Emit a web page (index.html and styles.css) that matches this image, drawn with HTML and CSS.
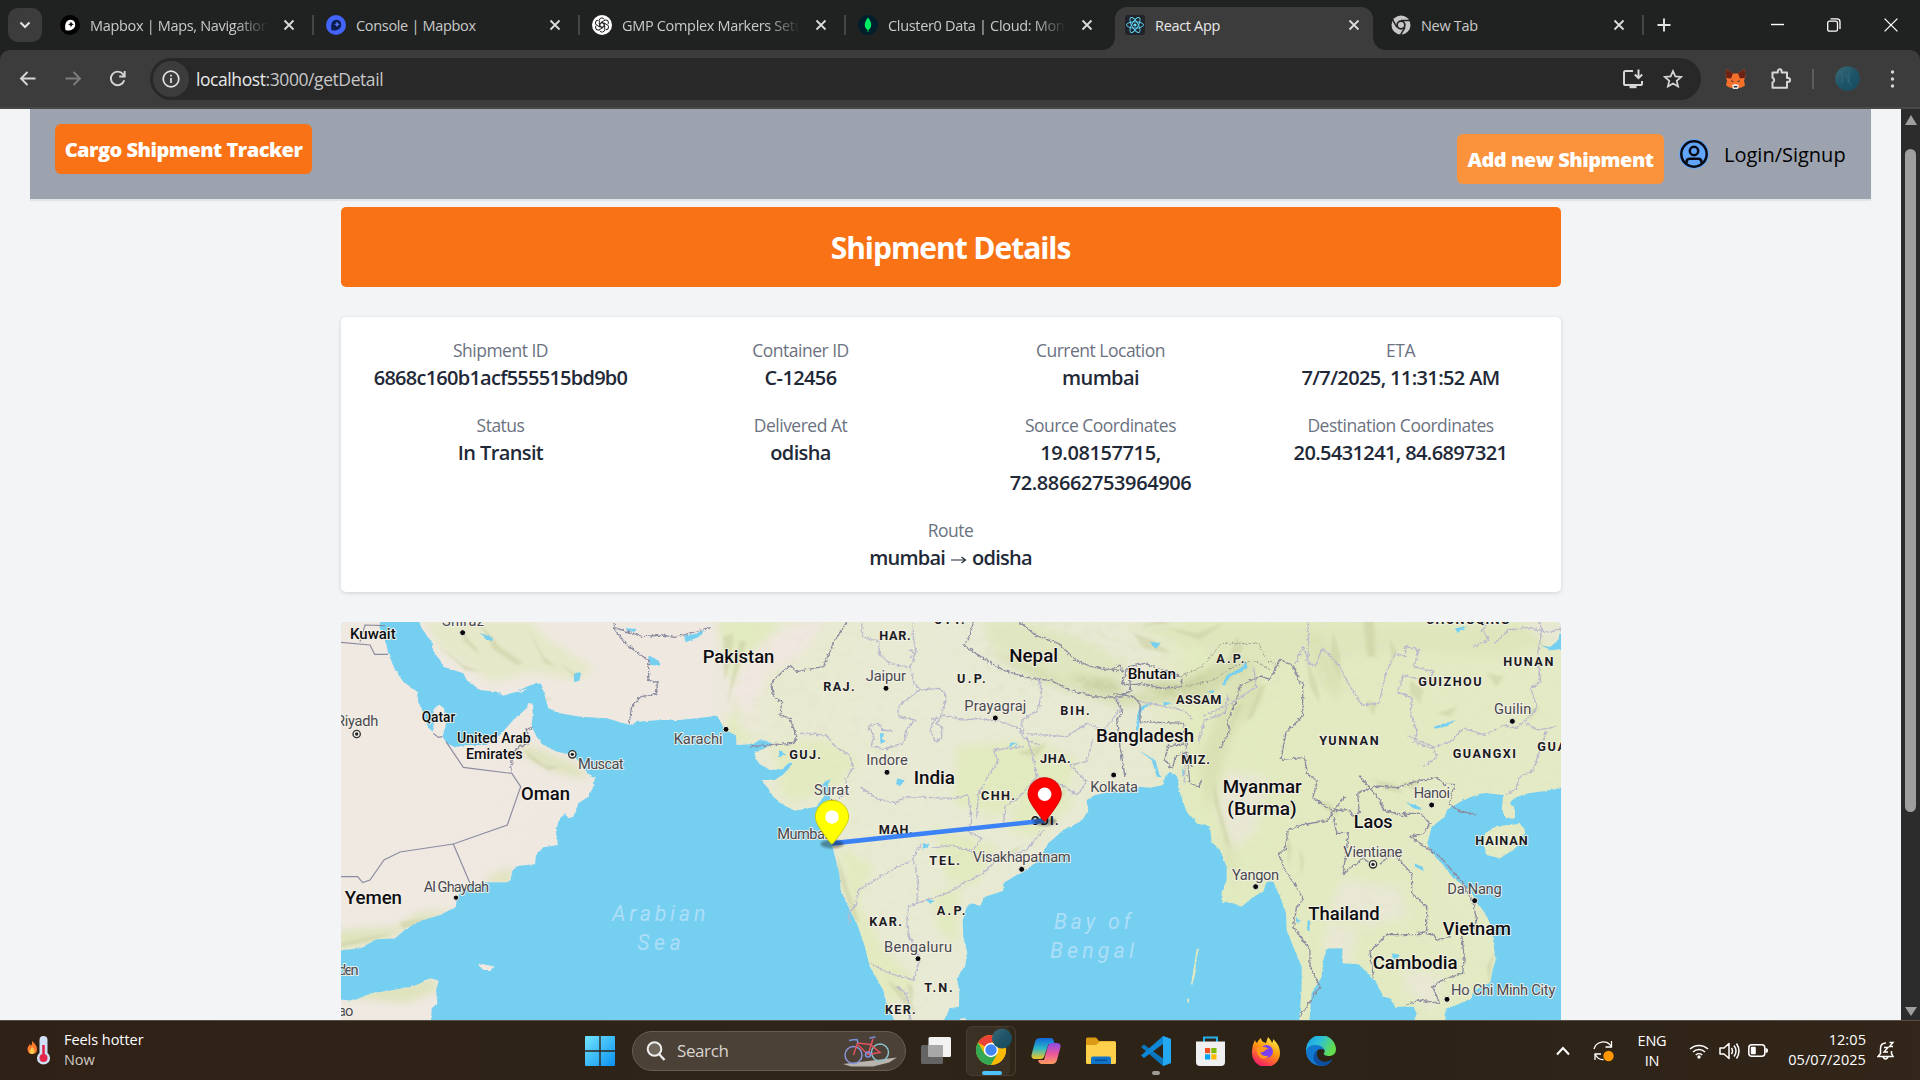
FILE: index.html
```html
<!DOCTYPE html>
<html lang="en">
<head>
<meta charset="utf-8">
<title>React App</title>
<link rel="stylesheet" href="styles.css">
</head>
<body>
<svg class="defs" width="0" height="0" aria-hidden="true">
  <symbol id="x" viewBox="0 0 12 12"><path d="M1.5 1.5l9 9M10.500 1.500l-9 9" fill="none" stroke="currentColor" stroke-width="1.8"/></symbol>
  <symbol id="chromeg" viewBox="0 0 20 20"><circle cx="10" cy="10" r="9.500" fill="#c7c7c7"/><circle cx="10" cy="10" r="4.700" fill="#202221"/><circle cx="10" cy="10" r="3" fill="#c7c7c7"/><path d="M10 5.400h9M6 12.300L1.500 4.600M14 12.300l-4.500 7.700" stroke="#202221" stroke-width="1.500"/></symbol>
</svg>

<header class="tabstrip">
  <div class="tabsearch"><svg width="12" height="8" viewBox="0 0 12 8"><path d="M1.500 1.500L6 6l4.500-4.500" fill="none" stroke="#e3e3e3" stroke-width="2"/></svg></div>
  <div class="tabs">
    <div class="tab">
      <svg class="fav" viewBox="0 0 20 20"><circle cx="10" cy="10" r="10" fill="#000"/><path d="M5.500 15.300c-1-6 .4-10.500 5.300-10.500a4.900 4.900 0 0 1 4.400 4.900c0 4.600-4.600 6.200-9.700 5.600z" fill="#fff"/><path d="M11 6.400l.9 2 2 .9-2 .9-.9 2-.9-2-2-.9 2-.9z" fill="#000"/></svg>
      <span class="tabtext fade">Mapbox | Maps, Navigation</span><svg class="close"><use href="#x"/></svg>
    </div>
    <div class="tab">
      <svg class="fav" viewBox="0 0 20 20"><circle cx="10" cy="10" r="10" fill="#4264fb"/><path d="M5.500 15.300c-1-6 .4-10.500 5.300-10.500a4.900 4.900 0 0 1 4.400 4.900c0 4.600-4.600 6.200-9.700 5.600z" fill="#0c1c4d"/><path d="M11 6.400l.9 2 2 .9-2 .9-.9 2-.9-2-2-.9 2-.9z" fill="#5c7aff"/></svg>
      <span class="tabtext">Console | Mapbox</span><svg class="close"><use href="#x"/></svg>
    </div>
    <div class="tab">
      <svg class="fav" viewBox="0 0 20 20"><circle cx="10" cy="10" r="10" fill="#fff"/><g fill="none" stroke="#222" stroke-width="1"><path id="petal" d="M10 7.500L7.300 9V5.500a2.600 2.600 0 0 1 5-1"/><use href="#petal" transform="rotate(60 10 10)"/><use href="#petal" transform="rotate(120 10 10)"/><use href="#petal" transform="rotate(180 10 10)"/><use href="#petal" transform="rotate(240 10 10)"/><use href="#petal" transform="rotate(300 10 10)"/><path d="M10 7.500l2.200 1.250v2.500L10 12.500l-2.200-1.250v-2.500z"/></g></svg>
      <span class="tabtext fade">GMP Complex Markers Setup</span><svg class="close"><use href="#x"/></svg>
    </div>
    <div class="tab">
      <svg class="fav" viewBox="0 0 20 20"><circle cx="10" cy="10" r="10" fill="#001e2b"/><path d="M10 2.500c4.500 5.500 4 10 .4 12.500V17h-.8v-2C6 12.500 5.500 8 10 2.500z" fill="#00ed64"/></svg>
      <span class="tabtext fade">Cluster0 Data | Cloud: MongoDB</span><svg class="close"><use href="#x"/></svg>
    </div>
    <div class="tab active">
      <svg class="fav" viewBox="0 0 20 20"><rect width="20" height="20" rx="3" fill="#20232a"/><g fill="none" stroke="#61dafb" stroke-width=".9"><ellipse cx="10" cy="10" rx="8.500" ry="3.200"/><ellipse cx="10" cy="10" rx="8.500" ry="3.200" transform="rotate(60 10 10)"/><ellipse cx="10" cy="10" rx="8.500" ry="3.200" transform="rotate(120 10 10)"/></g><circle cx="10" cy="10" r="1.600" fill="#61dafb"/></svg>
      <span class="tabtext">React App</span><svg class="close"><use href="#x"/></svg>
    </div>
    <div class="tab last">
      <svg class="fav"><use href="#chromeg"/></svg>
      <span class="tabtext">New Tab</span><svg class="close"><use href="#x"/></svg>
    </div>
    <svg class="plus" viewBox="0 0 14 14"><path d="M7 .5v13M.5 7h13" stroke="#e3e3e3" stroke-width="1.900"/></svg>
  </div>
  <div class="winctl">
    <svg viewBox="0 0 14 14"><path d="M1 6.500h13" stroke="#fff" stroke-width="1.400"/></svg>
    <svg viewBox="0 0 14 14"><rect x=".7" y="3.200" width="9.800" height="10" rx="1.800" fill="none" stroke="#fff" stroke-width="1.300"/><path d="M3.500 .9h6.500a3 3 0 0 1 3 3v7" fill="none" stroke="#fff" stroke-width="1.300"/></svg>
    <svg viewBox="0 0 14 14"><path d="M.6 .6l12.800 12.800M13.400 .6L.6 13.400" stroke="#fff" stroke-width="1.300"/></svg>
  </div>
</header>

<nav class="toolbar">
  <div class="ib"><svg width="20" height="20" viewBox="0 0 20 20"><path d="M17.500 9.500H3.500M9.500 3L3 9.500 9.500 16" fill="none" stroke="#d6d6d6" stroke-width="1.900"/></svg></div>
  <div class="ib"><svg width="20" height="20" viewBox="0 0 20 20"><path d="M2.500 9.500h14M10.500 3L17 9.500 10.500 16" fill="none" stroke="#7d7d7d" stroke-width="1.900"/></svg></div>
  <div class="ib"><svg width="20" height="20" viewBox="0 0 20 20"><path d="M16.200 11.300A6.800 6.800 0 1 1 15 5.200L16.500 7M16.700 2v5.500h-5.500" fill="none" stroke="#d6d6d6" stroke-width="1.900"/></svg></div>
  <div class="omnibox">
    <span class="info"><svg width="18" height="18" viewBox="0 0 18 18"><circle cx="9" cy="9" r="7.800" fill="none" stroke="#e3e3e3" stroke-width="1.700"/><path d="M9 8v5M9 4.800v1.800" stroke="#e3e3e3" stroke-width="1.700"/></svg></span>
    <span class="url"><b>localhost</b>:3000/getDetail</span>
    <svg class="oi" width="22" height="22" viewBox="0 0 22 22"><path d="M11 3H3.600Q2 3 2 4.600v10.800Q2 17 3.600 17h14.800Q20 17 20 15.400V13" fill="none" stroke="#d6d6d6" stroke-width="2"/><path d="M7.500 18h7v2.200h-7z" fill="#d6d6d6"/><path d="M16.500 1.500v8M12.800 6.500l3.700 3.700 3.700-3.700" fill="none" stroke="#d6d6d6" stroke-width="2"/></svg>
    <svg class="oi" width="20" height="20" viewBox="0 0 20 20"><path d="M10 2l2.300 5.400 5.900.5-4.500 3.900 1.400 5.700L10 14.500l-5.100 3 1.400-5.700L1.800 7.900l5.900-.5z" fill="none" stroke="#d6d6d6" stroke-width="1.700"/></svg>
  </div>
  <div class="ext"><svg width="21" height="20" viewBox="0 0 21 20"><path d="M1.500 0l6.500 4.500h5L19.500 0l1 7-1.500 4.500 1 5-3.500 2-3 .5h-6l-3-.5L1 16.500l1-5L.5 7z" fill="#f6702c"/><path d="M1.500 0l6.500 4.500-2 5-4.500-.5-1-2zM19.500 0L13 4.500l2 5 4.500-.5 1-2z" fill="#6c2215"/><path d="M7 16l3.500-1 3.500 1-1 4H8z" fill="#e8e6e6"/><path d="M6 11l3 1.500-2 .5zM15 11l-3 1.500 2 .5zM8.500 17h4l-.7 1.600H9.200z" fill="#27303b"/></svg></div>
  <div class="ext"><svg width="22" height="22" viewBox="0 0 22 22"><path d="M2.500 5.500h5.300V4.200a1.900 1.900 0 0 1 3.800 0v1.300H17V11h1.200a1.900 1.900 0 0 1 0 3.800H17v6H2.500v-5.300a2.500 2.500 0 0 0 0-4.700z" fill="none" stroke="#d6d6d6" stroke-width="2" stroke-linejoin="round" transform="translate(0 -1)"/></svg></div>
  <i class="tsep"></i>
  <div class="ext"><svg width="25" height="25" viewBox="0 0 25 25"><defs><linearGradient id="sea" x1="0" y1="0" x2="1" y2="1"><stop offset="0" stop-color="#3c6a78"/><stop offset=".5" stop-color="#1f5568"/><stop offset="1" stop-color="#174a5e"/></linearGradient></defs><circle cx="12.500" cy="12.500" r="12.300" fill="url(#sea)"/><path d="M6 5q3 6 1 12M15 4q-3 8 1 16M10 8q4 3 3 9" stroke="#3b7387" stroke-width="1" fill="none" opacity=".6"/></svg></div>
  <div class="ext"><svg width="6" height="20" viewBox="0 0 6 20"><g fill="#d6d6d6"><circle cx="2.500" cy="3" r="1.700"/><circle cx="2.500" cy="10" r="1.700"/><circle cx="2.500" cy="17" r="1.700"/></g></svg></div>
</nav>

<main class="viewport">
  <div class="page">
    <div class="navbar">
      <div class="brand"><span>Cargo Shipment Tracker</span></div>
      <div class="actions">
        <div class="add"><span>Add new Shipment</span></div>
        <svg class="user" viewBox="0 0 30 30"><circle cx="15" cy="15" r="15" fill="#60a5fa"/><circle cx="15" cy="15" r="12.700" fill="none" stroke="#0b0b14" stroke-width="2.500"/><circle cx="15" cy="12" r="4.200" fill="none" stroke="#0b0b14" stroke-width="2.500"/><path d="M7.500 24.500v-1.700a3.300 3.300 0 0 1 3.300-3h8.400a3.300 3.300 0 0 1 3.300 3v1.700" fill="none" stroke="#0b0b14" stroke-width="2.500"/></svg>
        <span class="login">Login/Signup</span>
      </div>
    </div>
    <div class="content">
      <h1 class="title">Shipment Details</h1>
      <section class="card">
        <div><p class="label">Shipment ID</p><p class="value hash">6868c160b1acf555515bd9b0</p></div>
        <div><p class="label">Container ID</p><p class="value">C-12456</p></div>
        <div><p class="label">Current Location</p><p class="value">mumbai</p></div>
        <div><p class="label">ETA</p><p class="value">7/7/2025, 11:31:52 AM</p></div>
        <div><p class="label">Status</p><p class="value">In Transit</p></div>
        <div><p class="label">Delivered At</p><p class="value">odisha</p></div>
        <div><p class="label">Source Coordinates</p><p class="value coord">19.08157715,<br>72.88662753964906</p></div>
        <div><p class="label">Destination Coordinates</p><p class="value">20.5431241, 84.6897321</p></div>
        <div class="wide"><p class="label">Route</p><p class="value">mumbai <svg class="arrow" viewBox="0 0 16 10"><path d="M0 5h14M10.500 2L14.500 5l-4 3" fill="none" stroke="#1f2937" stroke-width="1.200"/></svg> odisha</p></div>
      </section>
      <div class="map">
<svg viewBox="3 6 3660 1194" width="1220" height="398">
  <defs>
    <linearGradient id="landfill" gradientUnits="userSpaceOnUse" x1="0" y1="0" x2="3660" y2="0">
      <stop offset="0" stop-color="#efe9e2"/><stop offset=".3" stop-color="#eee8e0"/><stop offset=".36" stop-color="#e8ead0"/><stop offset=".5" stop-color="#e9ead5"/><stop offset=".66" stop-color="#e8e9d2"/><stop offset=".7" stop-color="#e2eabf"/><stop offset="1" stop-color="#e4eac5"/>
    </linearGradient>
    <filter id="rough" x="-2%" y="-2%" width="104%" height="104%"><feTurbulence type="fractalNoise" baseFrequency=".09" numOctaves="2" seed="4"/><feDisplacementMap in="SourceGraphic" scale="8" xChannelSelector="R" yChannelSelector="G"/></filter>
    <filter id="jag" x="-2%" y="-2%" width="104%" height="104%"><feTurbulence type="fractalNoise" baseFrequency=".11" numOctaves="2" seed="9"/><feDisplacementMap in="SourceGraphic" scale="13" xChannelSelector="R" yChannelSelector="G"/></filter>
    <filter id="relief" x="0" y="0" width="1" height="1"><feTurbulence type="fractalNoise" baseFrequency=".03 .045" numOctaves="4" seed="12"/><feColorMatrix values="0 0 0 0 .74  0 0 0 0 .78  0 0 0 0 .55  3 0 0 0 -1.55"/></filter>
    <filter id="soft"><feGaussianBlur stdDeviation="12"/></filter>
    <filter id="soft2" x="-20%" y="-20%" width="140%" height="140%"><feGaussianBlur stdDeviation="3"/></filter>
    <path id="asia" d="M235 0L245 25 275 65 280 95 300 120 310 140 370 160 380 180 420 210 470 215 490 227 530 215 560 200 590 188 605 195 615 230 625 265 660 280 720 290 800 295 870 315 890 305 960 300 1020 300 1110 290 1130 285 1150 320 1165 335 1188 345 1190 375 1240 372 1262 358 1300 372 1242 400 1255 430 1290 450 1325 448 1350 425 1358 432 1335 460 1305 480 1266 480 1300 530 1330 555 1365 572 1430 560 1450 530 1445 495 1460 480 1467 500 1472 540 1480 580 1475 670 1485 710 1498 760 1502 810 1525 860 1555 920 1575 980 1590 1040 1630 1110 1640 1150 1665 1205 1810 1205 1830 1165 1857 1160 1858 1110 1850 1075 1875 1040 1882 1000 1870 950 1868 900 1880 860 1895 850 1920 858 1935 830 1990 812 1990 790 2030 765 2060 750 2100 715 2125 670 2170 630 2220 605 2245 575 2240 540 2265 525 2340 510 2400 500 2430 503 2470 495 2475 470 2490 455 2512 470 2520 520 2540 575 2575 612 2610 620 2615 665 2640 690 2660 740 2660 780 2645 815 2645 845 2680 850 2705 860 2740 830 2770 815 2780 785 2800 785 2820 830 2838 880 2840 930 2860 980 2885 1040 2885 1100 2878 1205 2908 1205 2915 1120 2945 1070 2950 1020 2960 985 3008 985 3008 1030 3055 1033 3085 1060 3110 1090 3130 1130 3150 1135 3165 1160 3220 1160 3230 1180 3222 1205 3315 1205 3320 1165 3350 1155 3395 1135 3400 1110 3450 1090 3458 1050 3467 1020 3460 970 3455 920 3435 880 3410 845 3390 810 3340 775 3305 730 3275 700 3262 670 3275 620 3315 590 3320 570 3370 540 3395 530 3430 518 3490 525 3485 570 3500 597 3525 595 3525 570 3510 550 3520 535 3565 520 3620 512 3670 500 3670 0z"/>
    <path id="arabia" d="M-10 0H122L118 20 135 60 145 100 165 150 190 185 232 215 235 250 245 265 262 320 278 335 283 300 280 270 295 252 312 265 318 310 308 350 320 370 345 382 380 375 440 375 480 345 520 300 560 265 565 248 580 255 575 320 590 350 610 375 650 395 700 405 720 430 745 462 765 472 760 500 745 530 715 550 700 590 685 595 675 580 655 605 648 635 654 675 610 682 588 705 585 733 530 738 515 755 512 780 500 787 440 787 390 795 370 805 350 835 348 860 300 885 240 903 200 925 165 955 110 958 60 985-10 992z"/>
    <path id="isles" d="M-10 1138L40 1142 95 1120 150 1112 215 1100 245 1088 270 1075 296 1082 288 1110 292 1150 275 1165 273 1205H-10zM415 1035L430 1032 465 1040 450 1050 430 1050zM3435 640L3470 618 3540 612 3555 630 3545 665 3520 690 3480 715 3440 705 3430 670zM2577 985L2568 1025 2566 1060 2556 1098 2553 1090 2562 1040 2570 988zM2543 1135l5 2-2 14-5-3zM1860 1196l15-2 8 10h-22zM530 215l30-9-15 12z"/>
    <clipPath id="landclip"><use href="#asia"/><use href="#arabia"/><use href="#isles"/></clipPath>
  </defs>
  <rect x="0" y="0" width="3670" height="1210" fill="#75cff0"/>
  <g filter="url(#rough)" fill="url(#landfill)"><use href="#asia"/><use href="#arabia"/><use href="#isles"/></g>
  <g clip-path="url(#landclip)">
    <g filter="url(#soft)">
      <path d="M250 0h320l60 60 140 90-60 30-140-20-110 30-160-100z" fill="#e3e9c3" opacity=".8"/>
      <path d="M1130 0h180l-40 120-80 120-50 140 70-20-20-90zM1140 280l60 90h60z" fill="#e2eac0"/>
      <path d="M1370 10l90-10-100 130-70 20-60 130-60-60 40-100 80-70z" fill="#efe7e0"/>
      <path d="M1300 380l150-20 110 60-90 100-130 20zM1500 680l100 60-50 100 80 150 100 90-80 80-90-130z" fill="#e3eabf"/>
      <path d="M1850 380l230-20 130 60-40 130-120-20-80 60-130-40zM1780 620l190 60-70 120-80-20zM1780 820l80-20-10 180-60-60zM2050 520l160 20-120 110-90-20z" fill="#e2eabf"/>
      <path d="M1930 0h110l200 60 120 80-20 60-130 10-160-60-100-80z" fill="#e0e6c0"/>
      <path d="M1920 85l170 60 120 60 130 20 200-20 90-75 110-20 50-50 30 20-120 90-120 70-240 15-250-80z" fill="#d3daab"/>
      <path d="M2180 165l150 20 20 30-100-10zM2360 185l160 5 110-50-40 40-90 40z" fill="#c4cc99"/>
      <path d="M2340 20h1330v40l-200 50-300-20-400 50-300-90z" fill="#dfe6bc"/>
      <path d="M2740 110l30 120-90 110-80 240-20-160 70-180zM2900 20l30 150 60 70 20-60-60-120zM3070 0l10 110 30 0-10-120zM2620 480l60 150 10 200-40-160z" fill="#dae1b3"/>
      <path d="M2660 450l120 20-30 160-70 60-50-120zM3000 780l180 20 20 90-110 30-120-50zM3200 1040l110 30-30 110-90-80zM2960 900l90 30-20 110-80-40zM3540 0l130 0v100l-60-40z" fill="#e9e8d4"/>
      <path d="M520 380l60 0 140 60 30 40-90-20-90-40zM440 772l75-30 0 50h-80zM-10 930l180-10 60-40 120-15-140 60-80 40-140 30zM40 1110l240-40 20 40-100 40-200-20z" fill="#dfe3bd"/>
    </g>
    <rect x="1130" y="0" width="2540" height="1210" filter="url(#relief)" opacity=".28"/>
    <rect x="1900" y="0" width="1250" height="230" filter="url(#relief)" opacity=".5"/>
    <g filter="url(#soft2)" fill="#cdd1a5" opacity=".6">
      <path d="M420 10l60 70 70 50-20 4-70-45zM300 80l70 55 55 20-50-5zM370 40l40 45 8 20-50-45zM560 20l55 95 35 25-35-10zM555 390l60 45 45 5-35 12-60-40zM590 235h50l-30 10zM660 130l50 35-8 5zM180 905l90-12 50-18-70 32-60 20zM0 970l90-20 70-10-80 25-90 18z"/>
      <path d="M1150 50l30-10-8 80-18 60zM1200 60l20 5-60 190zM1640 1080l50 30 40 70-40-30zM1700 1090l20 10-5 60zM1490 700l30 90 40 120-20-20-40-110zM1890 710l110-10 60-30-70 50zM2030 400l90-30-30 40zM2100 540l80-30-20 30z"/>
      <path d="M2380 40l60 20 50 40-80-15zM2470 20l100 20 80-30-70 50zM2690 50l20 30-30 60-20-10zM2760 200l18-8-40 100-20 10zM2690 260l18-8-40 80zM2900 120l30 70 10 60-30-50zM2980 40l20 60 0 80-30-70zM3070 0l14 110 22 0-6-115zM3150 60l20 30-15 40zM3210 180l40 30-10 40-30-30zM3100 480l60 10 30 30-50-10zM3180 490l60-10-20 30zM2620 480l20 80 30 120-12-10-35-120zM2840 650l15 30-10 60zM2880 690l12 30-8 50zM2930 540l40 10 30 40-40-20zM3290 280l60-20-20 30zM3440 160l50 10-20 30zM3560 270l40-10-30 40zM3440 1040l20-40-12 90zM3080 240l30 10-10 40zM2400 20l60-20 30 10z"/>
    </g>
  </g>
  <g fill="#75cff0" filter="url(#rough)">
    <path d="M418 38l18 6 22 10-2 10-20-8zM702 160l22-4-6 26-16 4zM925 105l20 12 18 8-4 12-32-3zM1032 45l30-2 30-12-10 18-45 18zM858 25l32 2-6 8-22-2zM1620 340l12 0-6 16 10 8-14 8zM1670 475l24 6-14 18-10-6zM2010 370l20-5-22 18zM2028 372l10-4-20 16z"/>
    <path d="M1750 668l20 4-8 10-14 4zM1755 835l30 8-15 8zM2430 65l32 4-15 18zM3200 545l40 16 5 10-25-6zM2868 890l12 12-6 10zM2903 903l8 3-3 28-6-3zM3222 730l25 10 5 14-22-12zM3155 1000l25 5-10 12-12-3zM3600 75l30 6 25-20 3-20 12 0v45l-35 5zM3345 25l35-6-28 20zM1317 390l20 14-20 8zM1452 482l20-3-8 14z"/>
    <path d="M2720 125l2 20-20 12-30 10-20 30-6-2 15-30 40-20zM2600 215l25-6-10 10zM2470 245l28 4-26 8zM2400 262l40-18-36 30-10 60-6-5 4-50zM2395 390l20 12 32 20 10 40 8 10-14-2-16-50zM2528 440l6 24-8 6zM3280 320l40-12 28-8-25 18-38 8z"/>
  </g>
  <g fill="none" filter="url(#jag)" stroke-linejoin="round">
    <g stroke="#b9b9cd" stroke-width="4">
      <path d="M1565 10l3 40 48 14 2 40 30 25 60 14 10-20 10-30-8-40 0-45M1708 90q15 0 15 15l-12 5M1710 140l12 50 20 20M1740 210l55-5q30 10 20 45l-15 40-25 10M1740 210l-55 40q-20 25-5 40l45 10-25 30-8 38-60 20-38-10 8-30-18-30 30-8 15 20 30 5M1790 290l-20 35 15 40 20-10 0-35-15-10 20-25 60 15 50-5 60 10 60 20 10 30 48 20M1380 340l80 5 30 40 40 20 8 40-20 30 0 40-40 40M1560 500l50 35 55 15 30-20 150 5 40-10 10 80-10 30 40 20-30 40-60-20-60 10"/>
      <path d="M1745 670l-30 50-60 30-50 30-50 30-10 50-20 20 5 30M1720 720l15 60-5 70-25 10-5 50 10 50M1730 850l90-30 50-30 60-30 40-40 90-30 50-60M1590 1030l60 30 70 20 20-60-30-70M1670 1100l30 20 10 80M2050 380l-90 10 15 35-30 40-30 60-5 70M2060 350l20 60 10 60-50 60-45 30-5 60M2095 170l10 40-10 60-50 30 5 40 130 10 60-40 50 20 50-60-10-40M2090 470l60 15 60 40 30-40-50-50 50-10 20-70"/>
      <path d="M2400 245l130 25 30 30M2590 290l100-50 60-40-10-60M2575 370l20-70 60-20 10-60M2540 370l-8 120M2905 0l0 120-15-40-25 50M2895 120l30 20 22-55 50 50 30 60 40 60 50-5 20-90 30-60 30 10 0-30 40 10-15 50 60 15-20 30-70-20-20 50 45 20-5 50 20 50-10 30 50 20 60-20 40-40 60 20 60-30 40 10 60-60-20-60 30-20-10-80 15-80-20-45-50 0-50 20-30-20-30 50 20 30-50 20M3465 70l40-40 60-8 60 15 40-10M3200 345l80 35 10 30-40 30M3560 310l30 20 60-10M3620 330l-20 60-20 60-40 20-15 40-30 15"/>
    </g>
    <g stroke="#8c8ca0" stroke-width="4">
      <path d="M823 10l-2 15 40 50 65 47v60l28 5-6 35-45 8-28 30-8 50M822 22l85 28 60-5 35 7 45-12 65-18M512 455l5-40 12-30 35-15-5-40 18-8"/>
      <path d="M1520 6l-40 64-30 70-80 15-20-20-55 50 5 45 25 15-5 40 30 10 20 55-10 20-80 5-50 5M1900 6l-10 40-18 30 60 40 60 35 80 25 60 5 60 30 75 20 75 0 30-20-5-60-50 0-60-10-50-20-50-50-70-25-60-50M2310 150l30-15 5 20M2345 190q30 8 60 0l60 15 60-5 0-30-60-20-50-20-50 10zM2320 220l60 10 20 20 0 55 130 5 10 70M2320 230l20 30 10 20-20 20 10 80 10 60 5 30"/>
      <path d="M2535 372l-50 5-10 40 20 30 15-40 30-10 15 40M2585 480l-10 20-25-10-10-90M2640 388l30-60-10-20 30-70 10-40 60-30 30 10 30-60 40 20 20 50 8 0 0 100-50 50-15 80 70-5 10 50 30 20-15 50 60 40 50-5 10 20 20-10-5-60 30-10 30-10 60 5 60-20 60-10 20 20 30 0-15 60 30 20 50 10M3060 470l60 70 10 30 70 20-10-10 50 0 30 30-20 30-40 10 90 60 70 80 30 60 10 50-10 30"/>
      <path d="M3015 530l-35 40-15 30-80 15-40 15-10 60-20 10 20 50 40 60 15 30-20 20-10 60 50 70 0 50 30 60-60 90M2980 590l10 50 35 0-15 120 60-45 20 15M3120 730l40-30 55 60 0 60 45 40 0 70-20 14-100 0-50 50 10 80M3280 945l-50-10M3280 940l10 20 40-10M3365 950l8 60-5 50-60 20-30 20 20 50-60-10-40 15"/>
    </g>
    <path d="M2525 170l60-30 60-70 60 0 50 0 25 50 40 20M2540 200l80-20 60-40 60-20 50 30" stroke="#9a9a90" stroke-width="3" stroke-dasharray="6 4"/>
  </g>
  <path d="M0 67l90 8 14 28 40 0M60 65l15-50 60 2M280 340l15 12 12-2M318 365l52 77 142 18M514 458l28 42-40 115-162 57 50 118M340 672l-160 24-48 24-42 60-22 8-15-18h-53" fill="none" stroke="#8c8ca0" stroke-width="3.500"/>
  <g class="dots">
    <circle cx="368" cy="38" r="9"/><circle cx="348" cy="833" r="8"/><circle cx="1158" cy="328" r="9"/><circle cx="1638" cy="205" r="9"/><circle cx="1641" cy="457" r="9"/><circle cx="1475" cy="546" r="9"/><circle cx="1966" cy="294" r="9"/><circle cx="2321" cy="465" r="9"/><circle cx="2045" cy="748" r="9"/><circle cx="1734" cy="1016" r="9"/><circle cx="2747" cy="800" r="9"/><circle cx="3275" cy="555" r="9"/><circle cx="3517" cy="304" r="9"/><circle cx="3404" cy="842" r="9"/><circle cx="3321" cy="1138" r="9"/>
  </g>
  <g class="caps"><circle cx="50" cy="342" r="11"/><circle cx="697" cy="403" r="11"/><circle cx="3099" cy="733" r="11"/><circle class="in" cx="50" cy="342" r="5"/><circle class="in" cx="697" cy="403" r="5"/><circle class="in" cx="3099" cy="733" r="5"/></g>
  <g class="country">
    <text x="1088" y="130" textLength="215" lengthAdjust="spacingAndGlyphs">Pakistan</text><text x="543" y="540" textLength="147" lengthAdjust="spacingAndGlyphs">Oman</text><text x="14" y="853" textLength="172" lengthAdjust="spacingAndGlyphs">Yemen</text><text x="2008" y="126" textLength="146" lengthAdjust="spacingAndGlyphs">Nepal</text><text x="1721" y="491" textLength="124" lengthAdjust="spacingAndGlyphs">India</text><text x="2268" y="365" textLength="294" lengthAdjust="spacingAndGlyphs">Bangladesh</text><text x="2648" y="520" textLength="237" lengthAdjust="spacingAndGlyphs">Myanmar</text><text x="2662" y="586" textLength="208" lengthAdjust="spacingAndGlyphs">(Burma)</text><text x="3041" y="625" textLength="117" lengthAdjust="spacingAndGlyphs">Laos</text><text x="2905" y="899" textLength="214" lengthAdjust="spacingAndGlyphs">Thailand</text><text x="3308" y="945" textLength="205" lengthAdjust="spacingAndGlyphs">Vietnam</text><text x="3098" y="1048" textLength="255" lengthAdjust="spacingAndGlyphs">Cambodia</text>
  </g>
  <g class="country small">
    <text x="30" y="57" textLength="137" lengthAdjust="spacingAndGlyphs">Kuwait</text><text x="245" y="305" textLength="101" lengthAdjust="spacingAndGlyphs">Qatar</text><text x="351" y="369" textLength="221" lengthAdjust="spacingAndGlyphs">United Arab</text><text x="378" y="416" textLength="170" lengthAdjust="spacingAndGlyphs">Emirates</text><text x="2363" y="178" textLength="145" lengthAdjust="spacingAndGlyphs">Bhutan</text>
  </g>
  <g class="state">
    <text x="1618" y="60" textLength="94">HAR.</text><text x="1450" y="213" textLength="94">RAJ.</text><text x="1851" y="190" textLength="86">U.P.</text><text x="2161" y="286" textLength="88">BIH.</text><text x="1348" y="417" textLength="95">GUJ.</text><text x="2100" y="430" textLength="92">JHA.</text><text x="1923" y="539" textLength="102">CHH.</text><text x="2072" y="614" textLength="84">ODI.</text><text x="1616" y="642" textLength="102">MAH.</text><text x="1768" y="735" textLength="92">TEL.</text><text x="1790" y="885" textLength="86">A.P.</text><text x="1588" y="917" textLength="98">KAR.</text><text x="1753" y="1116" textLength="85">T.N.</text><text x="1635" y="1183" textLength="92">KER.</text><text x="2629" y="128" textLength="84">A.P.</text><text x="2508" y="251" textLength="136">ASSAM</text><text x="2524" y="433" textLength="86">MIZ.</text><text x="2938" y="375" textLength="178">YUNNAN</text><text x="3235" y="198" textLength="190">GUIZHOU</text><text x="3490" y="137" textLength="150">HUNAN</text><text x="3338" y="413" textLength="190">GUANGXI</text><text x="3592" y="392" textLength="178">GUANGD</text><text x="3406" y="675" textLength="157">HAINAN</text><text x="1782" y="12" textLength="92">UTT.</text><text x="3258" y="11" textLength="250">CHONGQING</text>
  </g>
  <g class="city">
    <text x="306" y="17" textLength="126">Shiraz</text><text x="-12" y="318" textLength="127">Riyadh</text><text x="714" y="448" textLength="137">Muscat</text><text x="251" y="815" textLength="196">Al Ghaydah</text><text x="1001" y="371" textLength="147">Karachi</text><text x="-29" y="1066" textLength="85">Aden</text><text x="-63" y="1187" textLength="103">Burao</text><text x="1577" y="183" textLength="121">Jaipur</text><text x="1873" y="273" textLength="186">Prayagraj</text><text x="1579" y="435" textLength="124">Indore</text><text x="1422" y="524" textLength="106">Surat</text><text x="1312" y="658" textLength="152">Mumbai</text><text x="2251" y="515" textLength="143">Kolkata</text><text x="1898" y="727" textLength="294">Visakhapatnam</text><text x="1632" y="995" textLength="204">Bengaluru</text><text x="2676" y="780" textLength="141">Yangon</text><text x="3221" y="534" textLength="109">Hanoi</text><text x="3462" y="283" textLength="112">Guilin</text><text x="3010" y="710" textLength="177">Vientiane</text><text x="3322" y="821" textLength="163">Da Nang</text><text x="3333" y="1126" textLength="313">Ho Chi Minh City</text>
  </g>
  <g class="sea"><text x="816" y="903" textLength="280">Arabian</text><text x="892" y="991" textLength="130">Sea</text><text x="2142" y="926" textLength="230">Bay of</text><text x="2130" y="1013" textLength="252">Bengal</text></g>
  <path d="M1476 670L2114 602" stroke="#3b82f6" stroke-width="14"/>
  <g opacity=".35" filter="url(#soft2)"><ellipse cx="1476" cy="672" rx="35" ry="13"/><ellipse cx="2114" cy="604" rx="35" ry="13"/></g>
  <g transform="translate(1426 541) scale(3.700)"><path d="M27 13.500C27 19.070 20.250 27 14.750 34.500c-.73 1-1.770 1-2.500 0C6.750 27 0 19.220 0 13.500a13.500 13.500 0 0 1 27 0z" fill="#ff0" stroke="#c9c900" stroke-width=".7"/><circle cx="13.500" cy="13.500" r="5.500" fill="#fff"/></g>
  <g transform="translate(2064 473) scale(3.700)"><path d="M27 13.500C27 19.070 20.250 27 14.750 34.500c-.73 1-1.770 1-2.500 0C6.750 27 0 19.220 0 13.500a13.500 13.500 0 0 1 27 0z" fill="#f00" stroke="#c90000" stroke-width=".7"/><circle cx="13.500" cy="13.500" r="5.500" fill="#fff"/></g>
</svg>
      </div>
    </div>
  </div>
  <div class="scrollbar"><i class="up"></i><i class="thumb"></i><i class="down"></i></div>
</main>

<footer class="taskbar">
  <div class="weather">
    <svg width="25" height="30" viewBox="0 0 25 30"><path d="M5 5c3 3 5 5 5 8.500S7.500 18 5 18 .5 16 .5 13s2-3 2-5q1 0 1.500 2 1.500-2 1-5z" fill="#ff7a2e"/><path d="M5 11c2 2 2.500 3 2.500 4.500S6.500 18 5 18s-2.500-1-2.500-2.500S4 13 5 11z" fill="#ffc94d"/><path d="M12.500 4a4 4 0 0 1 8 0v13a6.500 6.500 0 1 1-8 0z" fill="#cfe0f4"/><circle cx="16.500" cy="22" r="4" fill="#e3264a"/><path d="M15.200 9h2.600v13h-2.600z" fill="#e3264a"/></svg>
    <div class="wtext"><div>Feels hotter</div><div class="now">Now</div></div>
  </div>
  <div class="center">
    <svg class="start" width="30" height="30" viewBox="0 0 30 30"><defs><linearGradient id="win" x1="0" y1="0" x2="1" y2="1"><stop offset="0" stop-color="#71e5ff"/><stop offset="1" stop-color="#0a90f0"/></linearGradient></defs><path d="M1 0h13.300v14.300H0V1a1 1 0 0 1 1-1zM15.700 0H29a1 1 0 0 1 1 1v13.300H15.700zM0 15.700h14.300V30H1a1 1 0 0 1-1-1zM15.700 15.700H30V29a1 1 0 0 1-1 1H15.700z" fill="url(#win)"/></svg>
    <div class="search">
      <svg width="20" height="20" viewBox="0 0 20 20"><circle cx="8.500" cy="8" r="6.800" fill="#6f675c" stroke="#eee" stroke-width="2"/><path d="M13 13l5.500 6" stroke="#eee" stroke-width="2.400"/></svg>
      <span>Search</span>
      <svg class="bike" width="54" height="32" viewBox="0 0 54 32"><path d="M0 29l54-6.500-8 5-16 4H8z" fill="#b9b4ad"/><g fill="none" stroke-width="1.500"><circle cx="10.500" cy="20" r="8.500" stroke="#8a94dd"/><circle cx="37" cy="17.500" r="8.500" stroke="#8bc1cf"/><path d="M10.500 20l4-12 13 1.500 9.500 8-12 2-10-9.500M25 19.500l5-15.500" stroke="#e2525f"/><path d="M6 5.500q4-1 8-1l1 3.500M26.500 3l6-1" stroke="#7d8fd8"/><circle cx="25" cy="19.500" r="2.500" stroke="#7d90dd"/></g></svg>
    </div>
    <div class="app"><svg width="30" height="30" viewBox="0 0 30 30"><rect y="9" width="22" height="19" rx="1.500" fill="#646464"/><rect x="7.500" y="1" width="22.500" height="20" rx="1.500" fill="#f2f2f2"/><rect x="7.500" y="9" width="14.500" height="12" fill="#a8a8a8"/></svg></div>
    <div class="app on"><svg width="38" height="40" viewBox="0 0 38 40"><circle cx="16" cy="23" r="15" fill="#fbbc05"/><path d="M16 23L3 15.500a15 15 0 0 1 26 0H16z" fill="#ea4335"/><path d="M3 15.500A15 15 0 0 0 16 38l6.500-11.300L16 23l-6.500 3.700z" fill="#34a853"/><path d="M29 15.500H16V23l6.500 3.700L16 38a15 15 0 0 0 13-22.500z" fill="#fbbc05"/><circle cx="16" cy="23" r="7.200" fill="#fff"/><circle cx="16" cy="23" r="5.700" fill="#4285f4"/><circle cx="27" cy="11.500" r="10" fill="url(#sea)"/></svg><i></i></div>
    <div class="app"><svg width="30" height="28" viewBox="0 0 30 28"><defs><linearGradient id="cpa" x1="0" y1="0" x2="0" y2="1"><stop offset="0" stop-color="#0f67d8"/><stop offset=".5" stop-color="#2eb6c8"/><stop offset="1" stop-color="#f4c820"/></linearGradient><linearGradient id="cpb" x1="0" y1="0" x2="0" y2="1"><stop offset="0" stop-color="#8a4be8"/><stop offset=".5" stop-color="#e8569e"/><stop offset="1" stop-color="#ff9b5c"/></linearGradient></defs><path d="M9 1h11q2 0 2.500 2l1 4h-6L13 20q-1 2-3 2H4q-4 0-3.500-4L4 5q1-4 5-4z" fill="url(#cpa)"/><path d="M21 27H11q-3 0-4-4h6L17 9q1-3 4-3h5q4 0 3.500 4L26 23q-1 4-5 4z" fill="url(#cpb)"/></svg></div>
    <div class="app"><svg width="30" height="28" viewBox="0 0 30 28"><path d="M0 2Q0 .5 1.500.5h8.500l3 3.500h15.500Q30 4 30 5.500V12H0z" fill="#dc9a14"/><path d="M0 8h10l4-3.500h14.500Q30 4.500 30 6v19.500Q30 27 28.500 27h-27Q0 27 0 25.500z" fill="#ffd04c"/><path d="M5 27v-5.500Q5 19.500 7 19.500h16q2 0 2 2V27z" fill="#1274c9"/><path d="M9 23.200h12" stroke="#0a4c93" stroke-width="1.400"/></svg></div>
    <div class="app dot"><svg width="30" height="30" viewBox="0 0 30 30"><path d="M22 0l8 3v24l-8 3L0 11l3-2.500 19 14z" fill="#0b76bd"/><path d="M22 0v8L3 22 0 19.500z" fill="#0f86d6"/><path d="M22 0l8 3v24l-8 3z" fill="#25a8f2"/></svg><i></i></div>
    <div class="app"><svg width="30" height="30" viewBox="0 0 30 30"><path d="M8 7V1.500h13V7" fill="none" stroke="#25b0ec" stroke-width="2"/><path d="M0 5.500h29V26q0 4-4 4H4q-4 0-4-4z" fill="#f0f0f0"/><path d="M9 12h5.200v5.200H9z" fill="#f25022"/><path d="M15.300 12h5.200v5.200h-5.200z" fill="#7fba00"/><path d="M9 18.300h5.200v5.200H9z" fill="#00a4ef"/><path d="M15.300 18.300h5.200v5.200h-5.200z" fill="#ffb900"/></svg></div>
    <div class="app"><svg width="30" height="30" viewBox="0 0 30 30"><defs><linearGradient id="fx" x1=".8" y1="0" x2=".3" y2="1"><stop offset="0" stop-color="#fff04a"/><stop offset=".45" stop-color="#ff980e"/><stop offset="1" stop-color="#f5156c"/></linearGradient></defs><path d="M17 1q3 3 4 6 1.500-2 1-4 7 6 7 14A14 14 0 0 1 1 17Q.5 10 4 4q.5 2 2 3 1-3 4-5 0 4 5 5 1-3 2-6z" fill="url(#fx)"/><circle cx="15.500" cy="15.500" r="6.500" fill="#7a3ff0"/><path d="M6 12q6-3 12 1-3-.3-4 1.500t-5 2q3 5 9 3-5 6-10 1-3-4-2-8.500z" fill="#ff9a1c"/></svg></div>
    <div class="app"><svg width="30" height="30" viewBox="0 0 30 30"><defs><linearGradient id="ed" x1="0" y1="0" x2="1" y2=".4"><stop offset="0" stop-color="#1a9be8"/><stop offset=".5" stop-color="#2dc0d8"/><stop offset="1" stop-color="#62dd4e"/></linearGradient></defs><path d="M0 15A15 15 0 0 1 30 13q0 6-6 7-5 .5-6.500-2 1.500-1.500 1-4Q14 7 5 12z" fill="url(#ed)"/><path d="M0 15Q2 9 9 9q7 0 9.500 5-7-3-8 3-.5 7 7 9 5 1 9-3-4 7-11.500 7A15 15 0 0 1 0 15z" fill="#1277cf"/><path d="M10.500 17q-1 8 8 9 5 0 8-3-3 6-9 7Q8 29 7.500 22q0-6 5-8-2 1-2 3z" fill="#0c4fa0"/></svg></div>
  </div>
  <div class="tray">
    <svg class="chev" width="14" height="10" viewBox="0 0 14 10"><path d="M1 8.500l6-6.500 6 6.500" fill="none" stroke="#fff" stroke-width="2"/></svg>
    <svg class="sync" width="22" height="22" viewBox="0 0 22 22"><path d="M1 9A9.500 9.500 0 0 1 18 6M18.500 1v6h-6M2 20v-6h6M2.500 15q3 5 8 4.500" fill="none" stroke="#fff" stroke-width="1.300"/><circle cx="15.500" cy="16" r="5.200" fill="#ff9800"/></svg>
    <div class="lang">ENG<br>IN</div>
    <svg class="wifi" width="20" height="16" viewBox="0 0 20 16"><g fill="none" stroke="#fff" stroke-width="1.500"><path d="M1 6a13 13 0 0 1 18 0M4 9a8.700 8.700 0 0 1 12 0M6.800 12a4.700 4.700 0 0 1 6.400 0"/></g><circle cx="10" cy="14" r="1.700" fill="#fff"/></svg>
    <svg class="vol" width="21" height="18" viewBox="0 0 21 18"><path d="M1 6h4l5-4.500v15L5 12H1zM12.500 6q2 3 0 6M15 3.500q4 5.500 0 11M17.500 1.500q5 7.500 0 15" fill="none" stroke="#fff" stroke-width="1.500" stroke-linejoin="round"/></svg>
    <svg class="bat" width="20" height="13" viewBox="0 0 20 13"><rect x=".8" y=".8" width="16" height="11.400" rx="3" fill="none" stroke="#fff" stroke-width="1.500"/><rect x="2.800" y="2.800" width="5" height="7.400" rx="1" fill="#fff"/><path d="M17.500 4q2.500 0 2.500 2.500T17.500 9z" fill="#fff"/></svg>
    <div class="clock">12:05<br>05/07/2025</div>
    <svg width="18" height="20" viewBox="0 0 18 20"><path d="M9 2Q3.500 2 3.500 7.500v5L1 15.500h15l-1.500-3V10M6 16q2.500 4 5 0" fill="none" stroke="#fff" stroke-width="1.500"/><path d="M7 6.500h4l-4 4.500h4M12.500 1.500h3.500l-3.500 4h3.500" fill="none" stroke="#fff" stroke-width="1.400"/></svg>
  </div>
</footer>
</body>
</html>
```
FILE: styles.css
```css
* { box-sizing: border-box; }
body { margin: 0; width: 1920px; height: 1080px; overflow: hidden; display: flex; flex-direction: column; font-family: "Open Sans", "Noto Sans", sans-serif; background: #202221; }
p, h1 { margin: 0; }
svg { display: block; flex: none; }
.defs { position: absolute; }

/* browser tabs */
.tabstrip { height: 50px; flex: none; display: flex; align-items: center; background: #202221; padding-left: 8px; }
.tabsearch { width: 34px; height: 34px; margin-right: 7px; border-radius: 10px; background: #3c3c3c; display: flex; align-items: center; justify-content: center; }
.tabs { display: flex; align-items: center; height: 50px; }
.tab { width: 266px; height: 50px; padding-left: 11px; display: flex; align-items: center; color: #c9cac9; font-size: 14.5px; position: relative; }
.fav { width: 20px; height: 20px; margin-right: 10px; }
.tabtext { width: 178px; white-space: nowrap; overflow: hidden; letter-spacing: -.32px; }
.fade { -webkit-mask-image: linear-gradient(90deg, #000 82%, transparent); mask-image: linear-gradient(90deg, #000 82%, transparent); }
.close { width: 12px; height: 12px; margin-left: 15px; color: #dcdcdc; }
.tab:not(.active)::after { content: ""; position: absolute; left: 263px; top: 15px; width: 2px; height: 20px; background: #454746; }
.tab:nth-child(4)::after { display: none; }
.active { color: #e9e9e9; isolation: isolate; }
.active, .last { padding-left: 12px; }
.last .close { margin-left: 14px; }
.active::before { content: ""; position: absolute; z-index: -1; left: 2px; top: 7px; width: 258px; height: 43px; border-radius: 12px 12px 0 0; background: #3c3c3c; }
.active::after { content: ""; position: absolute; z-index: -1; left: -10px; bottom: 0; width: 282px; height: 12px; background: radial-gradient(circle at 0 0, transparent 11.5px, #3c3c3c 12px) 0 0 / 12px 12px no-repeat, radial-gradient(circle at 100% 0, transparent 11.5px, #3c3c3c 12px) 100% 0 / 12px 12px no-repeat; }
.plus { width: 14px; height: 14px; margin-left: 12px; }
.winctl { margin-left: auto; display: flex; gap: 43px; padding-right: 22px; }
.winctl svg { width: 14px; height: 14px; }

/* address bar */
.toolbar { height: 59px; flex: none; display: flex; align-items: center; background: #3c3c3c; border-bottom: 2px solid #484848; padding-left: 5px; border-radius: 10px 10px 0 0; }
.ib { width: 45px; display: flex; justify-content: center; }
.omnibox { width: 1551px; height: 42px; margin: 0 11px 0 10px; border-radius: 21px; background: #282828; display: flex; align-items: center; padding: 0 18px 0 3px; }
.info { width: 36px; height: 36px; border-radius: 50%; background: #3c3c3c; display: flex; align-items: center; justify-content: center; margin-right: 7px; }
.url { flex: 1; font-size: 17.5px; color: #c7c7c7; letter-spacing: -.42px; }
.url b { font-weight: 400; color: #e8e8e8; }
.oi { margin-left: 19px; }
.ext { width: 46px; display: flex; justify-content: center; }
.tsep { width: 2px; height: 20px; margin: 0 10px 0 8px; background: #5d5d5d; }

/* page */
.viewport { height: 911px; flex: none; display: flex; background: #f3f4f6; }
.page { width: 1901px; height: 911px; overflow: hidden; padding: 0 30px; }
.navbar { height: 90px; background: #9ca3af; display: flex; justify-content: space-between; align-items: flex-start; padding: 15px 25px 0; box-shadow: 0 2px 1px #e2e4e8; }
.brand, .add { height: 50px; border-radius: 6px; display: flex; align-items: center; justify-content: center; color: #fff; font-weight: 800; font-size: 20px; white-space: nowrap; }
.brand { width: 257px; background: #f97316; letter-spacing: -.5px; }
.actions { display: flex; align-items: center; margin-top: 10px; }
.add { width: 207px; background: #fb923c; letter-spacing: -.48px; }
.user { width: 30px; height: 30px; margin: -11px 15px 0; }
.login { width: 122px; font-size: 20px; font-weight: 500; color: #000; white-space: nowrap; margin-top: -9px; }
.content { width: 1220px; margin: 8px auto 0; }
.title { height: 80px; background: #f97316; border-radius: 5px; color: #fff; font-size: 30px; font-weight: 700; line-height: 82px; text-align: center; letter-spacing: -1.05px; }
.card { margin-top: 30px; height: 275px; padding: 20px; background: #fff; border-radius: 5px; box-shadow: 0 1px 4px rgba(0,0,0,.14); display: grid; grid-template-columns: repeat(4, 1fr); grid-template-rows: 55px 85px 55px; gap: 20px; text-align: center; }
.label { font-size: 17.5px; line-height: 27px; height: 25px; color: #6b7280; letter-spacing: -.5px; }
.value { font-size: 20px; line-height: 30px; padding-top: 1px; color: #1f2937; font-weight: 600; letter-spacing: -.62px; white-space: nowrap; }
.hash { letter-spacing: -.75px; }
.coord { letter-spacing: -.4px; }
.wide { grid-column: 1 / 5; }
.wide .value { letter-spacing: -.75px; }
.arrow { display: inline-block; width: 16px; height: 10px; margin: 0 1px; }
.map { margin-top: 30px; height: 398px; overflow: hidden; border-radius: 5px 5px 0 0; }
.map text { font-family: Roboto, sans-serif; paint-order: stroke; stroke: rgba(245,242,232,.9); stroke-width: 6px; stroke-linejoin: round; }
.country text { font-size: 57px; font-weight: 500; fill: #0d0d12; }
.small text { font-size: 45px; }
.state text { font-size: 38px; font-weight: 700; fill: #1b1b22; }
.city text { font-size: 44px; fill: #494950; }
.map .sea text { font-size: 64px; font-style: italic; font-weight: 400; fill: #addef8; stroke: none; }
.dots circle { fill: #08080a; stroke: #f2f0e4; stroke-width: 3px; }
.caps circle { fill: #f5f5f0; stroke: #333; stroke-width: 4px; }
.caps .in { fill: #222; stroke: none; }
.scrollbar { width: 19px; background: #2c2c2c; display: flex; flex-direction: column; align-items: center; padding-top: 6px; }
.up { border: 6px solid transparent; border-top: 0; border-bottom: 10px solid #9f9f9f; }
.thumb { width: 11px; height: 663px; margin: 24px 0 195px; border-radius: 6px; background: #9f9f9f; }
.down { border: 6px solid transparent; border-bottom: 0; border-top: 9px solid #9f9f9f; }

/* taskbar */
.taskbar { height: 60px; flex: none; display: flex; align-items: center; background: linear-gradient(90deg, #302116, #2e2418 40%, #2c2316 75%, #332519); border-top: 1px solid #57504a; color: #fff; font-size: 14.5px; line-height: 20px; letter-spacing: -.2px; }
.weather { width: 585px; padding-left: 27px; display: flex; align-items: center; gap: 12px; }
.wtext { margin-top: -2px; letter-spacing: -.05px; }
.now { color: #cfcac6; }
.center { display: flex; align-items: center; }
.search { width: 274px; height: 40px; margin: 0 2px 0 17px; padding: 0 8px 0 13px; border: 1px solid #675d52; border-radius: 20px; background: #4b4136; display: flex; align-items: center; gap: 11px; font-size: 17px; letter-spacing: -.4px; color: #d8d4d0; }
.bike { margin-left: auto; }
.app { width: 55px; height: 50px; display: flex; align-items: center; justify-content: center; position: relative; }
.on { width: 50px; margin: 0 2.5px; background: #3a3024; border: 1px solid #463c30; border-radius: 6px; box-shadow: inset -6px 0 0 -1px #312719; }
.on svg { margin: -8px 0 0 7px; }
.app i { position: absolute; bottom: 0; left: 15px; width: 20px; height: 4px; border-radius: 2px; background: #4cc2ff; }
.dot i { left: 24px; bottom: 1px; width: 8px; background: #9e9a95; }
.tray { margin-left: auto; display: flex; align-items: center; padding-right: 25px; }
.sync { margin-left: 23px; }
.lang { width: 50px; margin: 0 12px; text-align: center; }
.vol { margin-left: 10px; }
.bat { margin-left: 8px; }
.clock { width: 98px; text-align: right; margin: -2px 11px 0 0; letter-spacing: .08px; }
```
